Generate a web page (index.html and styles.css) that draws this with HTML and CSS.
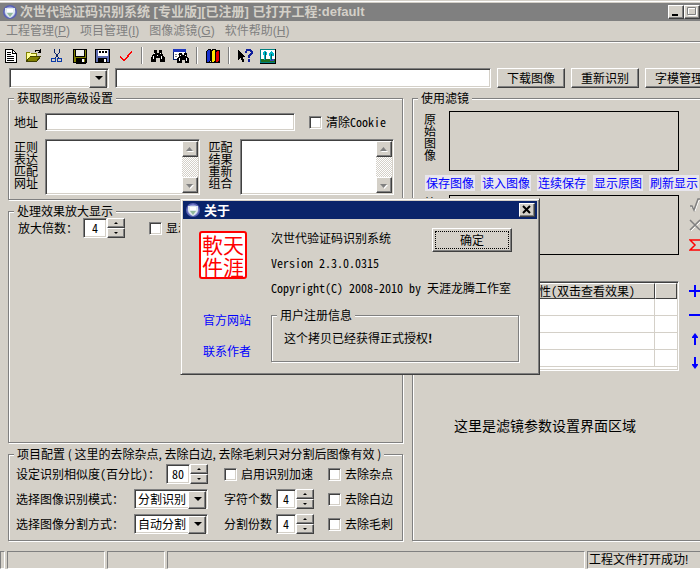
FILE: index.html
```html
<!DOCTYPE html>
<html lang="zh-CN">
<head>
<meta charset="utf-8">
<title>次世代验证码识别系统</title>
<link rel="stylesheet" href="styles.css">
</head>
<body>
<div class="window">
  <header class="titlebar">
    <svg class="app-icon" viewBox="0 0 16 16"><circle cx="8" cy="8" r="7" fill="#5a62b4"/><circle cx="8" cy="8" r="5.5" fill="#9aa2dc"/><path d="M3 4h10v4q-1 4-5 6q-4-2-5-6z" fill="#dfe9ee"/><path d="M5 9h6l-3 4z" fill="#8fb89a"/><path d="M5 5h6v3H5z" fill="#fff"/></svg>
    <h1>次世代验证码识别系统 [专业版][已注册] 已打开工程:default</h1>
    <div class="caption-buttons">
      <button class="raised cap" aria-label="最小化"><svg viewBox="0 0 12 10"><path d="M2 7h6v2H2z"/></svg></button>
      <button class="raised cap" aria-label="最大化"><svg viewBox="0 0 12 10"><path d="M2.500 1.500h8v7h-8z" fill="none" stroke="#fff"/><path d="M1.500 .5h8v7h-8z" fill="none" stroke="#808080"/></svg></button>
      <button class="raised cap" aria-label="关闭"><svg viewBox="0 0 12 10"><path d="M2 1l7 7M9 1l-7 7" stroke="#000" stroke-width="2"/></svg></button>
    </div>
  </header>
  <nav class="menubar">
    <a href="#">工程管理(<u>P</u>)</a>
    <a href="#">项目管理(<u>I</u>)</a>
    <a href="#">图像滤镜(<u>G</u>)</a>
    <a href="#">软件帮助(<u>H</u>)</a>
  </nav>
  <div class="toolbar">
    <button aria-label="新建"><svg viewBox="0 0 16 16"><path d="M2.500 1.500h7l4 4v9h-11z" fill="#fff" stroke="#000"/><path d="M9.500 1.500v4h4M4 4.500h4M4 6.500h4M4 8.500h7M4 10.500h7M4 12.500h7" fill="none" stroke="#000"/></svg></button>
    <button aria-label="打开"><svg viewBox="0 0 16 16"><path d="M.5 13.500v-9h3l1 1h6v3" fill="#ffff80" stroke="#808000"/><path d="M.5 13.500l3-5h11l-4 5z" fill="#808000" stroke="#404000"/><path d="M1 12V5h3l1 1h5v2H4l-3 4z" fill="#ff9"/><path d="M9 3.500q2-3 5 0M14.500 1v3h-3" fill="none" stroke="#000"/></svg></button>
    <button aria-label="剪切"><svg viewBox="0 0 16 16"><path d="M5.500 1v3l4 6M10.500 1v3l-4 6" fill="none" stroke="#0a246a"/><circle cx="4.500" cy="12" r="2" fill="none" stroke="#0a3aa8"/><circle cx="10.500" cy="12" r="2" fill="none" stroke="#0a3aa8"/></svg></button>
    <button aria-label="保存"><svg viewBox="0 0 16 16"><path d="M1.500 1.500h13v13h-13z" fill="#808000" stroke="#000"/><path d="M4 2h8v6H4z" fill="#eee"/><path d="M3.500 2v6.500h9V2M4 10h9v5H4z" fill="none" stroke="#000"/><path d="M4 10h8v4H4z"/><path d="M10 11h2v3h-2z" fill="#fff"/></svg></button>
    <button aria-label="另存为"><svg viewBox="0 0 16 16"><path d="M.5 1.500h14v13H.5z" fill="#5c6bb0" stroke="#000"/><path d="M3 2h10v6H3z" fill="#fff"/><path d="M4 3l2 2m0-2l-2 2m3-2l2 2m0-2l-2 2m3-2l2 2m0-2l-2 2" stroke="#000"/><path d="M3 10h9v4H3z"/><path d="M9 11h2v3H9z" fill="#fff"/></svg></button>
    <button aria-label="检查"><svg viewBox="0 0 16 16"><path d="M2 8.500l4 4l8-9" fill="none" stroke="#f00" stroke-width="1.500"/></svg></button>
    <i class="sep"></i>
    <button aria-label="查找"><svg viewBox="0 0 16 16"><path d="M4 2h3v3h2V2h3v3l3 5v4h-5v-4H6v4H1v-4l3-5z"/><path d="M4 5h1v1H4zM3 8h1v3H3zM10 5h1v1h-1zM11 8h1v3h-1zM7 7h1v1H7z" fill="#fff"/></svg></button>
    <button aria-label="查找窗口"><svg viewBox="0 0 16 16"><path d="M.5 1.500h12v10H.5z" fill="#fff" stroke="#0a246a"/><path d="M0 1h13v3H0z" fill="#2038c0"/><path d="M2 6.500h8M2 8.500h3" stroke="#808080" stroke-dasharray="2 1"/><path d="M6 5h3v2h2V5h3v3l2 3v4h-4v-3H9v3H4v-4l2-3z"/><path d="M7 7h1v1H7zM6 10h1v3H6zM12 7h1v1h-1zM13 10h1v3h-1z" fill="#fff"/></svg></button>
    <i class="sep"></i>
    <button aria-label="字典"><svg viewBox="0 0 16 16"><path d="M1.500 3.500l2-2h2v11l-2 2h-2z" fill="#1830d0" stroke="#000"/><path d="M6.500 2.500l2-1h2v11l-1 2h-3z" fill="#ffe800" stroke="#000"/><path d="M10.500 3.500l2-1h2v10l-1 2h-3z" fill="#e00000" stroke="#000"/><path d="M1 14.500h14" stroke="#000"/></svg></button>
    <i class="sep"></i>
    <button aria-label="帮助"><svg viewBox="0 0 17 16"><path d="M1 1v12l3-3l2 5l2-1l-2-5h3z"/><path d="M9.500 5V3.500l1.500-2h3l1.500 2v2l-3 2.500v2M12.500 11.500v2.500" fill="none" stroke="#10209c" stroke-width="2"/></svg></button>
    <button aria-label="图片"><svg viewBox="0 0 16 16"><path d="M.5 1.500h15v13H.5z" fill="#fff" stroke="#008080"/><path d="M15.500 1v14H0" fill="none" stroke="#000"/><path d="M1 11h14v3H1z" fill="#207020"/><path d="M10 11h4v2h-4z" fill="#4040c0"/><path d="M3 5l2-3l2 3v2H6v5H4V7H3zM9 6l2-3l3 3v2h-2v4h-2V8H9z" fill="#00b8c8"/><path d="M5 4v8M11 6v6" stroke="#006060"/></svg></button>
  </div>
  <div class="address-row">
    <span class="combo combo-wide"><select class="sunken" aria-label="图像来源"><option></option></select></span>
    <input class="sunken grow" type="text" aria-label="图像地址">
    <button class="raised wide">下载图像</button>
    <button class="raised wide">重新识别</button>
    <button class="raised wide">字模管理</button>
  </div>
  <main class="main">
    <div class="left">
      <fieldset class="advanced">
        <legend>获取图形高级设置</legend>
        <div class="line">
          <label class="tag" for="addr">地址</label>
          <input id="addr" class="sunken grow" type="text">
          <label class="check cookie"><input type="checkbox"><span>清除<span class="en">Cookie</span></span></label>
        </div>
        <div class="line tall">
          <label class="tag" for="regex">正则<br>表达<br>匹配<br>网址</label>
          <div class="area sunken"><textarea id="regex"></textarea><div class="scroll"><button class="raised" aria-label="向上"><svg viewBox="0 0 12 11"><path d="M3 8h7L6.500 4z" fill="#fff"/><path d="M2 7h7L5.500 3z" fill="#808080"/></svg></button><button class="raised" aria-label="向下"><svg viewBox="0 0 12 11"><path d="M3 5h7L6.500 9z" fill="#fff"/><path d="M2 4h7L5.500 8z" fill="#808080"/></svg></button></div></div>
          <label class="tag second" for="combine">匹配<br>结果<br>重新<br>组合</label>
          <div class="area sunken"><textarea id="combine"></textarea><div class="scroll"><button class="raised" aria-label="向上"><svg viewBox="0 0 12 11"><path d="M3 8h7L6.500 4z" fill="#fff"/><path d="M2 7h7L5.500 3z" fill="#808080"/></svg></button><button class="raised" aria-label="向下"><svg viewBox="0 0 12 11"><path d="M3 5h7L6.500 9z" fill="#fff"/><path d="M2 4h7L5.500 8z" fill="#808080"/></svg></button></div></div>
        </div>
      </fieldset>
      <fieldset class="preview">
        <legend>处理效果放大显示</legend>
        <div class="line">
          <label class="zoom-label" for="zoom">放大倍数：</label>
          <span class="spin"><input id="zoom" class="sunken" type="text" value="4"><span class="updown"><button class="raised up" aria-label="增加"></button><button class="raised down" aria-label="减少"></button></span></span>
          <label class="check show"><input type="checkbox">显示</label>
        </div>
      </fieldset>
      <fieldset class="config">
        <legend>项目配置 ( 这里的去除杂点, 去除白边, 去除毛刺只对分割后图像有效 )</legend>
        <div class="config-grid">
          <div class="pair main-pair"><label for="sim">设定识别相似度<span class="en">(</span>百分比<span class="en">)</span>：</label><span class="spin"><input id="sim" class="sunken" type="text" value="80"><span class="updown"><button class="raised up" aria-label="增加"></button><button class="raised down" aria-label="减少"></button></span></span></div>
          <label class="check"><input type="checkbox">启用识别加速</label>
          <label class="check"><input type="checkbox">去除杂点</label>
          <div class="pair main-pair"><label for="mode">选择图像识别模式：</label><span class="combo"><select id="mode" class="sunken"><option>分割识别</option></select></span></div>
          <div class="pair"><label for="count">字符个数</label><span class="spin small"><input id="count" class="sunken" type="text" value="4"><span class="updown"><button class="raised up" aria-label="增加"></button><button class="raised down" aria-label="减少"></button></span></span></div>
          <label class="check"><input type="checkbox">去除白边</label>
          <div class="pair main-pair"><label for="split">选择图像分割方式：</label><span class="combo"><select id="split" class="sunken"><option>自动分割</option></select></span></div>
          <div class="pair"><label for="parts">分割份数</label><span class="spin small"><input id="parts" class="sunken" type="text" value="4"><span class="updown"><button class="raised up" aria-label="增加"></button><button class="raised down" aria-label="减少"></button></span></span></div>
          <label class="check"><input type="checkbox">去除毛刺</label>
        </div>
      </fieldset>
    </div>
    <fieldset class="filters">
      <legend>使用滤镜</legend>
      <div class="filter-grid">
        <span class="vertical">原始图像</span>
        <div class="frame"></div>
        <span></span>
        <div class="links">
          <a href="#">保存图像</a><a href="#">读入图像</a><a href="#">连续保存</a><a href="#">显示原图</a><a href="#">刷新显示</a>
        </div>
        <span class="vertical">处理图像</span>
        <div class="frame"></div>
        <div class="side">
          <button aria-label="应用"><svg viewBox="0 0 16 14"><path d="M2 9h2l2 4l4-11h5" fill="none" stroke="#fff"/><path d="M1 8h2l2 4l4-11h5" fill="none" stroke="#808080" stroke-width="1.500"/></svg></button>
          <button aria-label="取消"><svg viewBox="0 0 16 14"><path d="M2 3l10 10M12 3L2 13" stroke="#fff"/><path d="M1 2l10 10M11 2L1 12" stroke="#808080" stroke-width="1.500"/></svg></button>
          <button aria-label="求和"><svg viewBox="0 0 16 14"><path d="M12 4V2H1l5 5l-5 5h11v-2" fill="none" stroke="#f00" stroke-width="1.500"/></svg></button>
        </div>
        <div class="list sunken">
          <table>
            <thead><tr><th class="name"></th><th>属性<span class="en">(</span>双击查看效果<span class="en">)</span></th><th class="last"></th></tr></thead>
            <tbody>
              <tr><td></td><td></td><td></td></tr>
              <tr><td></td><td></td><td></td></tr>
              <tr><td></td><td></td><td></td></tr>
              <tr><td></td><td></td><td></td></tr>
            </tbody>
          </table>
        </div>
        <div class="side moves">
          <button aria-label="添加"><svg viewBox="0 0 16 14"><path d="M0 7h12M6 1v12" stroke="#00f" stroke-width="2"/></svg></button>
          <button aria-label="删除"><svg viewBox="0 0 16 14"><path d="M0 7h12" stroke="#00f" stroke-width="2"/></svg></button>
          <button aria-label="上移"><svg viewBox="0 0 16 14"><path d="M6 13V3" stroke="#00f" stroke-width="2"/><path d="M6 1l3 4v1H3V5z" fill="#00f"/></svg></button>
          <button aria-label="下移"><svg viewBox="0 0 16 14"><path d="M6 1v10" stroke="#00f" stroke-width="2"/><path d="M6 13l3-4V8H3v1z" fill="#00f"/></svg></button>
        </div>
      </div>
      <p class="hint">这里是滤镜参数设置界面区域</p>
    </fieldset>
  </main>
  <footer class="status">
    <span class="cell tiny"></span><span class="cell first"></span><span class="cell second"></span><span class="cell fill"></span><span class="cell message">工程文件打开成功!</span>
  </footer>

  <section class="dialog" role="dialog" aria-labelledby="about">
    <div class="dialog-title">
      <svg class="app-icon" viewBox="0 0 16 16"><circle cx="8" cy="8" r="7" fill="#5a62b4"/><circle cx="8" cy="8" r="5.500" fill="#9aa2dc"/><path d="M3 4h10v4q-1 4-5 6q-4-2-5-6z" fill="#dfe9ee"/><path d="M5 9h6l-3 4z" fill="#8fb89a"/><path d="M5 5h6v3H5z" fill="#fff"/></svg>
      <h2 id="about">关于</h2>
      <button class="raised cap" aria-label="关闭"><svg viewBox="0 0 12 10"><path d="M2 1l7 7M9 1l-7 7" stroke="#000" stroke-width="2"/></svg></button>
    </div>
    <div class="dialog-body">
      <div class="brand">
        <div class="seal"><span>軟</span><span>天</span><span>件</span><span>涯</span></div>
        <a href="#">官方网站</a>
        <a href="#">联系作者</a>
      </div>
      <div class="about">
        <div class="about-head"><p>次世代验证码识别系统</p><button class="raised ok">确定</button></div>
        <p class="en">Version 2.3.0.0315</p>
        <p><span class="en">Copyright(C) 2008-2010 by </span>天涯龙腾工作室</p>
        <fieldset class="register">
          <legend>用户注册信息</legend>
          <p>这个拷贝已经获得正式授权<b>!</b></p>
        </fieldset>
      </div>
    </div>
  </section>
</div>
</body>
</html>
```
FILE: styles.css
```css
* { box-sizing: border-box; }

body {
  margin: 0;
  overflow: hidden;
  background: #d4d0c8;
  color: #000;
  font: 12px/14px "Noto Sans CJK SC", sans-serif;
}

button, input, select, textarea { font: inherit; color: inherit; margin: 0; }
button { padding: 0; border: 0; background: none; }
svg { display: block; }
h1, h2, p { margin: 0; }
a { text-decoration: none; }
.en { font-family: "Noto Sans Mono CJK SC", "Liberation Mono", monospace; white-space: pre; }

/* The frame reaches past the right edge of the viewport */
.window {
  position: relative;
  display: flex;
  flex-direction: column;
  width: calc(100% + 20px);
  min-height: 100vh;
  padding-top: 3px;
  box-shadow: inset 0 1px #d4d0c8, inset 0 2px #fff;
}

.raised {
  border: 1px solid;
  border-color: #fff #404040 #404040 #fff;
  background: #d4d0c8;
  box-shadow: inset -1px -1px #808080;
}
.sunken {
  border: 1px solid;
  border-color: #808080 #fff #fff #808080;
  border-radius: 0;
  background: #fff;
  box-shadow: inset 1px 1px #404040, inset -1px -1px #d4d0c8;
}
.grow { flex: 1; min-width: 0; }

.titlebar {
  display: flex;
  align-items: center;
  gap: 2px;
  height: 18px;
  padding: 0 4px 0 2px;
  background: #808080;
  color: #d4d0c8;
}
.app-icon { width: 16px; height: 16px; }
.titlebar h1 { flex: 1; font: bold 13px/18px "Liberation Sans", "Noto Sans CJK SC", sans-serif; white-space: nowrap; }
.caption-buttons { display: flex; }
.cap { width: 16px; height: 14px; padding: 1px; }
.cap svg { width: 12px; height: 10px; }

.menubar {
  display: flex;
  gap: 10px;
  height: 21px;
  padding-left: 6px;
  border-bottom: 1px solid #808080;
  line-height: 20px;
}
.menubar a { color: #808080; font-family: "Liberation Sans", "Noto Sans CJK SC", sans-serif; }

.toolbar {
  display: flex;
  align-items: center;
  gap: 7px;
  height: 26px;
  padding: 0 3px;
  border-top: 1px solid #fff;
}
.toolbar svg { width: 16px; height: 16px; shape-rendering: crispEdges; }
.sep { width: 2px; height: 17px; border-left: 1px solid #808080; border-right: 1px solid #fff; }

.address-row { display: flex; gap: 6px; height: 20px; padding: 0 7px 0 9px; }
.wide { width: 68px; line-height: 16px; }

.combo { position: relative; display: flex; width: 74px; height: 20px; }
.combo select { appearance: none; width: 100%; padding: 0 18px 0 3px; }
.combo::before {
  content: "";
  position: absolute;
  top: 2px;
  right: 2px;
  width: 16px;
  height: 16px;
  border: 1px solid;
  border-color: #fff #404040 #404040 #fff;
  background: #d4d0c8;
  box-shadow: inset -1px -1px #808080;
  pointer-events: none;
}
.combo::after {
  content: "";
  position: absolute;
  top: 8px;
  right: 6px;
  border: 4px solid transparent;
  border-top-color: #000;
  border-bottom: 0;
  pointer-events: none;
}
.combo-wide { width: 100px; }

.main { display: flex; flex: 1; gap: 9px; padding: 3px 8px 10px; }
.left { display: flex; flex-direction: column; gap: 4px; width: 395px; }

/* --inset is the left padding of a group; its legend ignores it */
fieldset {
  --inset: 5px;
  min-width: 0;
  margin: 0;
  border: 1px solid #808080;
  box-shadow: 1px 1px #fff, inset 1px 1px #fff;
}
legend {
  margin-left: calc(5px - var(--inset));
  padding: 0 3px;
  background: #d4d0c8;
  line-height: 14px;
  white-space: nowrap;
}

.line { display: flex; align-items: center; height: 20px; }
.tag { width: 31px; line-height: 12px; }
.check { display: flex; align-items: center; gap: 4px; white-space: nowrap; }
.check input {
  appearance: none;
  width: 13px;
  height: 13px;
  border: 1px solid;
  border-color: #808080 #fff #fff #808080;
  background: #fff;
  box-shadow: inset 1px 1px #404040, inset -1px -1px #d4d0c8;
}

.advanced { padding: 7px 8px 4px var(--inset); }
.cookie { width: 99px; padding-left: 14px; }
.tall { height: 56px; margin-top: 7px; align-items: stretch; }
.tall .tag { padding-top: 2px; }
.tall .second { width: 40px; padding-left: 9px; }
.area { display: flex; flex: 1; min-width: 0; padding: 1px; }
.area textarea { flex: 1; min-width: 0; padding: 0; border: 0; background: transparent; resize: none; }
.scroll {
  display: flex;
  flex-direction: column;
  justify-content: space-between;
  width: 16px;
  background: repeating-conic-gradient(#fff 0 25%, #d4d0c8 0 50%) 0 0 / 2px 2px;
}
.scroll button { height: 16px; padding: 1px; }
.scroll svg { width: 12px; height: 11px; }

.preview { --inset: 9px; flex: 1; padding: 0 9px 0 var(--inset); }
.zoom-label { width: 65px; white-space: nowrap; }
.show { margin-left: 24px; }

.spin { display: flex; height: 20px; }
.spin input { width: 24px; padding: 0; text-align: center; font-family: "Noto Sans Mono CJK SC", "Liberation Mono", monospace; }
.spin.small input { width: 20px; }
.updown { display: flex; flex-direction: column; width: 18px; }
.updown button { display: grid; place-items: center; height: 10px; }
.updown button::before { content: ""; border: 2px solid transparent; }
.updown .up::before { border-top-width: 0; border-bottom-color: #000; }
.updown .down::before { border-bottom-width: 0; border-top-color: #000; }

.config { --inset: 7px; padding: 3px 7px 6px var(--inset); }
.config-grid { display: grid; grid-template-columns: 194px 90px 1fr; gap: 5px 14px; grid-auto-rows: 20px; }
.pair { display: flex; align-items: center; justify-content: space-between; white-space: nowrap; }
.main-pair { padding-right: 2px; }

.filters { --inset: 11px; flex: 1; padding: 6px 6px 0 var(--inset); }
.filter-grid { display: grid; grid-template-columns: 25px 1fr 26px; row-gap: 4px; }
.vertical { width: 12px; padding-top: 2px; line-height: 12px; }
.frame { height: 60px; border: 1px solid #000; }
.links { display: flex; grid-column: 1 / -1; gap: 6px; height: 16px; padding-left: 1px; }
.links a { width: 50px; background: #e8e6ee; color: #00f; line-height: 16px; text-align: center; white-space: nowrap; }
.side { display: flex; flex-direction: column; gap: 6px; padding: 3px 0 0 10px; }
.side svg { width: 16px; height: 14px; }
.list { grid-column: 1 / 3; height: 90px; margin-top: 22px; padding: 1px; }
.moves { gap: 10px; margin-top: 22px; }
table { width: 100%; table-layout: fixed; border-collapse: separate; border-spacing: 0; border-bottom: 2px solid #fff; }
th {
  height: 16px;
  padding: 0 0 0 9px;
  border: 1px solid;
  border-color: #fff #404040 #404040 #fff;
  background: #d4d0c8;
  font-weight: normal;
  line-height: 14px;
  text-align: left;
  white-space: nowrap;
}
.name { width: 91px; }
.last { width: 22px; }
td { height: 17px; padding: 0; border-right: 1px solid #d4d0c8; border-bottom: 1px solid #d4d0c8; }
td:last-child { border-right: 0; }
.hint { margin: 47px 0 0 30px; font-size: 14px; line-height: 14px; }

.status { display: flex; gap: 2px; height: 18px; }
.cell { border: 1px solid; border-color: #808080 #fff #fff #808080; line-height: 16px; }
.tiny { width: 5px; }
.first { width: 98px; }
.cell.second { flex: none; width: 58px; }
.fill { flex: 1; }
.message { width: 133px; padding-left: 1px; font-family: "Liberation Sans", "Noto Sans CJK SC", sans-serif; }

/* About box, centred over the main frame */
.dialog {
  position: absolute;
  top: 198px;
  left: 50%;
  width: 360px;
  padding: 3px;
  transform: translateX(-50%);
  border: 1px solid;
  border-color: #d4d0c8 #404040 #404040 #d4d0c8;
  background: #d4d0c8;
  box-shadow: inset 1px 1px #fff, inset -1px -1px #808080;
}
.dialog-title { display: flex; align-items: center; gap: 3px; height: 18px; margin: -1px; padding: 0 2px; background: #0a246a; color: #fff; }
.dialog-title h2 { flex: 1; font-size: 13px; line-height: 18px; }
.dialog-body { display: flex; padding: 13px 17px 9px 15px; }
.brand { display: flex; flex-direction: column; width: 72px; }
.brand a { margin: 34px 0 0 4px; color: #00f; }
.brand a + a { margin-top: 17px; }
.seal {
  display: grid;
  grid-template-columns: 21px 21px;
  grid-auto-rows: 22px;
  width: 48px;
  height: 48px;
  padding: 0 1px;
  border: 2px solid #f00;
  border-radius: 3px;
  background: #fff;
  color: #f00;
  font: 21px/22px "Noto Sans CJK TC", sans-serif;
}
.about { flex: 1; min-width: 0; }
.about-head { display: flex; justify-content: space-between; height: 25px; }
.about > p { height: 25px; }
.about p { line-height: 14px; white-space: nowrap; }
.ok { width: 80px; height: 24px; margin: -3px 7px 0 0; outline: 1px dotted #000; outline-offset: -4px; }
.register { --inset: 12px; height: 54px; padding: 9px 12px 0 var(--inset); margin-top: 2px; }
```
